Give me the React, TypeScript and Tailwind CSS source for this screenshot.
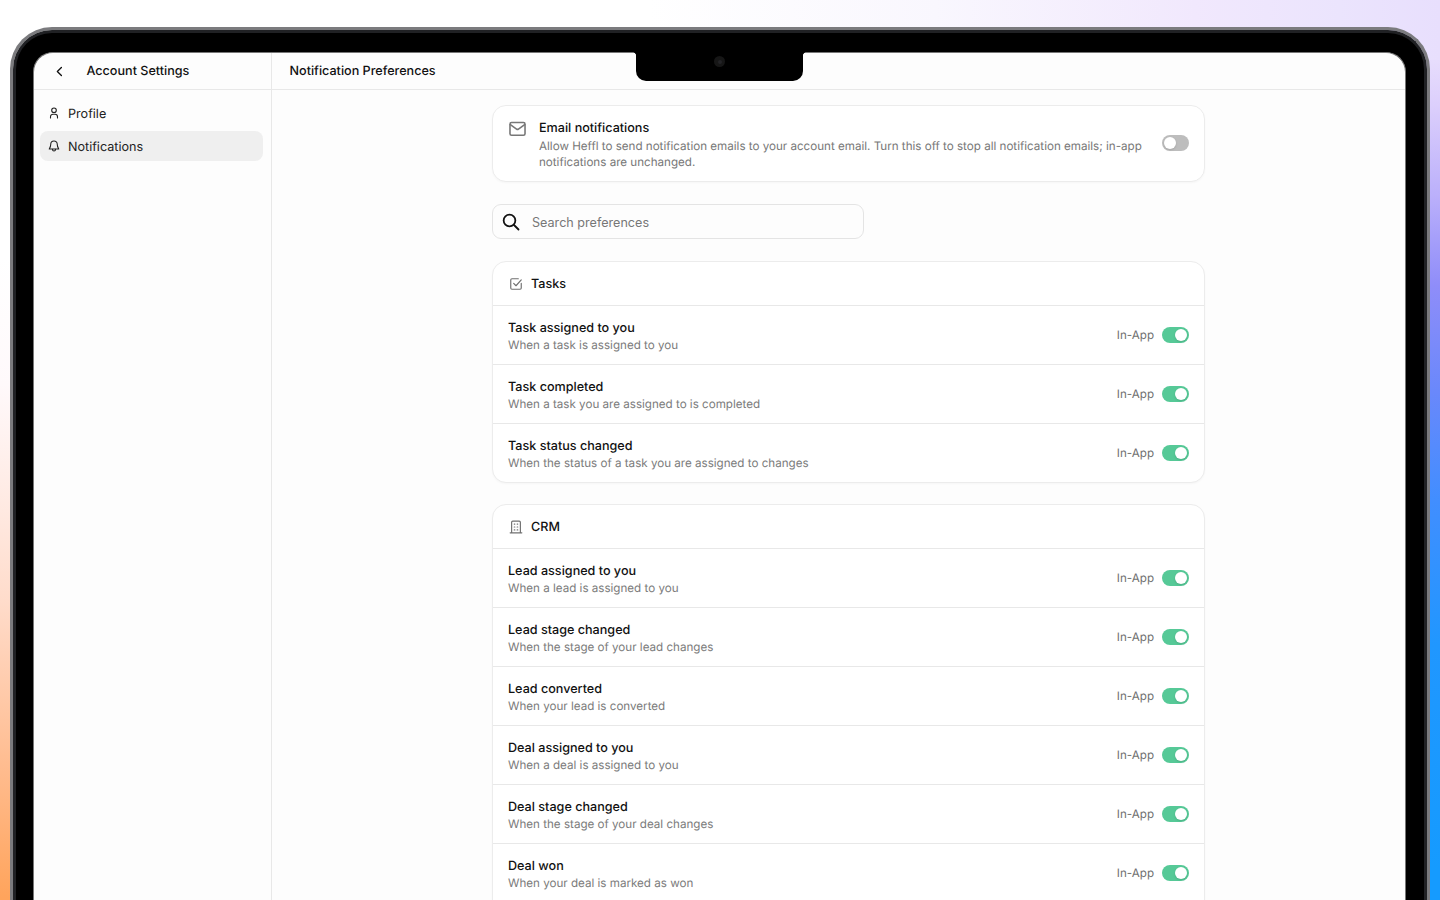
import * as React from "react";

interface Preference {
  title: string;
  description: string;
}

const taskPreferences: Preference[] = [
  { title: "Task assigned to you", description: "When a task is assigned to you" },
  { title: "Task completed", description: "When a task you are assigned to is completed" },
  { title: "Task status changed", description: "When the status of a task you are assigned to changes" },
];

const crmPreferences: Preference[] = [
  { title: "Lead assigned to you", description: "When a lead is assigned to you" },
  { title: "Lead stage changed", description: "When the stage of your lead changes" },
  { title: "Lead converted", description: "When your lead is converted" },
  { title: "Deal assigned to you", description: "When a deal is assigned to you" },
  { title: "Deal stage changed", description: "When the stage of your deal changes" },
  { title: "Deal won", description: "When your deal is marked as won" },
];

function Icon({ className, strokeWidth = 2, children }: { className: string; strokeWidth?: number; children: React.ReactNode }) {
  return (
    <svg
      viewBox="0 0 24 24"
      fill="none"
      stroke="currentColor"
      strokeWidth={strokeWidth}
      strokeLinecap="round"
      strokeLinejoin="round"
      className={className}
    >
      {children}
    </svg>
  );
}

function Toggle({ checked = false }: { checked?: boolean }) {
  return (
    <button
      role="switch"
      aria-checked={checked}
      className={
        checked
          ? "flex h-4 w-[27px] shrink-0 items-center justify-end rounded-full bg-[#56c997] px-[2px]"
          : "flex h-4 w-[27px] shrink-0 items-center rounded-full bg-[#bdbdbd] px-[2px]"
      }
    >
      <span className="size-3 rounded-full bg-white shadow-sm" />
    </button>
  );
}

function PreferenceCard({
  title,
  icon,
  items,
  className = "",
}: {
  title: string;
  icon: React.ReactNode;
  items: Preference[];
  className?: string;
}) {
  return (
    <section className={`rounded-[14px] border border-[#ececec] bg-white shadow-[0_1px_2px_rgba(0,0,0,0.03)] ${className}`}>
      <div className="flex h-[43px] items-center gap-2 pl-4 text-[#707070]">
        {icon}
        <h2 className="mt-[3px] text-[12.6px] font-medium text-[#111]">{title}</h2>
      </div>
      {items.map((item) => (
        <div key={item.title} className="flex h-[59px] items-center justify-between border-t border-[#e8e8e8] px-[15px]">
          <div className="pt-0.5">
            <p className="text-[12.6px] leading-[17px] font-medium text-[#111]">{item.title}</p>
            <p className="text-[11.62px] leading-4 text-[#7b7b7b]">{item.description}</p>
          </div>
          <div className="flex items-center gap-2">
            <span className="mt-px text-[11.62px] text-[#707070]">In-App</span>
            <Toggle checked />
          </div>
        </div>
      ))}
    </section>
  );
}

function Sidebar() {
  return (
    <aside className="w-[238px] shrink-0 border-r border-[#e8e8e8]">
      <div className="flex h-[37px] items-center border-b border-[#e8e8e8] pl-[19px]">
        <Icon className="size-[13px]" strokeWidth={2.4}>
          <path d="M15.5 4.5L8 12l7.5 7.5" />
        </Icon>
        <h1 className="mt-[3px] ml-[20.5px] text-[12.6px] font-medium">Account Settings</h1>
      </div>
      <nav className="flex flex-col gap-[3px] pt-2 pr-2 pl-1.5 text-[12.6px] text-[#222]">
        <a className="flex h-[30px] items-center gap-2 rounded-lg pl-2">
          <Icon className="size-3" strokeWidth={2.2}>
            <circle cx="12" cy="6.5" r="4.6" />
            <path d="M5 22v-2.5a5 5 0 0 1 5-5h4a5 5 0 0 1 5 5V22" />
          </Icon>
          <span className="mt-[5px]">Profile</span>
        </a>
        <a className="flex h-[30px] items-center gap-2 rounded-lg bg-[#efefef] pl-2">
          <Icon className="size-3" strokeWidth={2.2}>
            <path d="M12 2a6.5 6.5 0 0 0-6.5 6.5c0 4.5-1 6-3 9.5h19c-2-3.5-3-5-3-9.5A6.5 6.5 0 0 0 12 2z" />
            <path d="M9 18.5v.5a3 3 0 0 0 6 0v-.5" />
          </Icon>
          <span className="mt-[5px]">Notifications</span>
        </a>
      </nav>
    </aside>
  );
}

export default function App() {
  return (
    <div className="relative h-[900px] w-[1440px] overflow-hidden bg-white px-[10px] pt-[27px] font-['Inter',sans-serif] text-[#111] [text-rendering:geometricPrecision]">
      <div className="absolute inset-x-0 top-0 h-[60px] bg-[linear-gradient(90deg,#fff_0%,#fff_45%,#f9f7fe_65%,#f1e8fd_83%,#ebe4fd_93%,#e8dffd_100%)]" />
      <div className="absolute top-[60px] left-0 h-full w-[60px] bg-[linear-gradient(180deg,#fff_0%,#fff_22%,#fff9fb_36%,#ffe9e1_50%,#ffdccb_60%,#ffbd91_78%,#ffa45c_93%)]" />
      <div className="absolute top-[60px] right-0 h-full w-[60px] bg-[linear-gradient(180deg,#e7ddfd_0%,#dccffc_5%,#bbb0fb_15%,#8f8df9_25%,#6988fb_37%,#418eff_49%,#2097ff_65%,#159bff_90%)]" />

      {/* laptop bezel */}
      <div className="relative h-[920px] rounded-t-[42px] border-[3px] border-b-0 border-[#7b7b7e]">
        <div className="h-full rounded-t-[39px] border-[3px] border-b-0 border-[#202124] bg-black pt-[19px] pr-[18px] pl-[17px]">
          <div className="flex h-full overflow-hidden rounded-t-[20px] border border-b-0 border-[#777] bg-[#fdfdfd]">
            <Sidebar />
            <main className="flex-1">
              <header className="flex h-[37px] items-center border-b border-[#e8e8e8] pl-[17.5px]">
                <h1 className="mt-[3px] text-[12.6px] font-medium">Notification Preferences</h1>
              </header>
              <div className="ml-[220px] flex w-[713px] flex-col pt-[15px]">
                <section className="flex h-[77px] rounded-[14px] border border-[#ececec] bg-white pt-[13px] pr-[15px] pl-[15px] shadow-[0_1px_2px_rgba(0,0,0,0.03)]">
                  <Icon className="size-[19px] shrink-0 text-[#777]" strokeWidth={2}>
                    <rect x="2.5" y="4.5" width="19" height="16" rx="2" />
                    <path d="M3 7l7.8 5.7a2 2 0 0 0 2.4 0L21 7" />
                  </Icon>
                  <div className="ml-3 flex-1 pt-px">
                    <h2 className="text-[12.6px] leading-[17px] font-medium">Email notifications</h2>
                    <p className="w-[610px] pt-[2px] text-[11.62px] leading-[15.5px] text-[#777]">
                      Allow Heffl to send notification emails to your account email. Turn this off to stop all notification emails; in-app notifications are unchanged.
                    </p>
                  </div>
                  <div className="pt-4">
                    <Toggle />
                  </div>
                </section>

                <label className="mt-[22px] flex h-[35px] w-[372px] items-center rounded-[9px] border border-[#e4e4e4] pl-[9px]">
                  <Icon className="size-[18px]" strokeWidth={2.4}>
                    <circle cx="10" cy="10" r="7.8" />
                    <path d="M16 16l6 6" />
                  </Icon>
                  <input
                    placeholder="Search preferences"
                    className="mt-1 ml-3 flex-1 bg-transparent text-[12.6px] outline-none placeholder:text-[#777]"
                  />
                </label>

                <div className="mt-[22px] flex flex-col gap-[21px]">
                  <PreferenceCard
                    title="Tasks"
                    items={taskPreferences}
                    icon={
                      <Icon className="size-3.5">
                        <path d="M16 3H5a2 2 0 0 0-2 2v14a2 2 0 0 0 2 2h14a2 2 0 0 0 2-2v-8" />
                        <path d="M8 11l4 4L21 5" />
                      </Icon>
                    }
                  />
                  <PreferenceCard
                    title="CRM"
                    items={crmPreferences}
                    className="pb-10"
                    icon={
                      <Icon className="size-3.5">
                        <path d="M2 22h20M4.5 22V4a2 2 0 0 1 2-2h11a2 2 0 0 1 2 2v18" />
                        <path d="M9 7h1M14 7h1M9 12h1M14 12h1M9 17h1M14 17h1" />
                      </Icon>
                    }
                  />
                </div>
              </div>
            </main>
          </div>
        </div>
      </div>

      {/* camera notch */}
      <div className="absolute top-[52px] left-[633px] flex">
        <span className="size-[3px] bg-[radial-gradient(circle_at_0_100%,transparent_2.5px,#000_3px)]" />
        <div className="flex h-[29px] w-[167px] justify-center rounded-b-[10px] bg-black pt-1">
          <span className="flex size-[11px] items-center justify-center rounded-full bg-[#161616]">
            <span className="size-1 rounded-full bg-[#232326]" />
          </span>
        </div>
        <span className="size-[3px] bg-[radial-gradient(circle_at_100%_100%,transparent_2.5px,#000_3px)]" />
      </div>
    </div>
  );
}
